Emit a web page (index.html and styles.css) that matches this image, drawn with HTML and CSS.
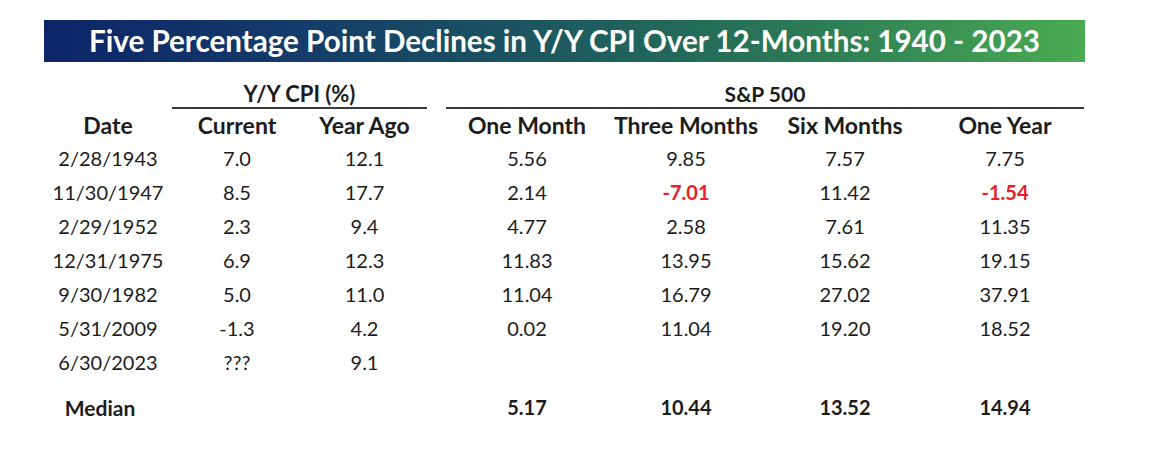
FILE: index.html
```html
<!DOCTYPE html>
<html>
<head>
<meta charset="utf-8">
<link rel="stylesheet" href="styles.css">
</head>
<body>
<div class="page">
  <div class="title">Five Percentage Point Declines in Y/Y CPI Over 12-Months: 1940 - 2023</div>
  <div class="table">
    <div class="row group">
      <div class="cell"></div>
      <div class="cell span2 underlined">Y/Y CPI (%)</div>
      <div class="cell"></div>
      <div class="cell span4 underlined sp">S&amp;P 500</div>
    </div>
    <div class="row head">
      <div class="cell">Date</div>
      <div class="cell">Current</div>
      <div class="cell">Year Ago</div>
      <div class="cell"></div>
      <div class="cell">One Month</div>
      <div class="cell">Three Months</div>
      <div class="cell">Six Months</div>
      <div class="cell">One Year</div>
    </div>
    <div class="row">
      <div class="cell">2/28/1943</div><div class="cell">7.0</div><div class="cell">12.1</div><div class="cell"></div>
      <div class="cell">5.56</div><div class="cell">9.85</div><div class="cell">7.57</div><div class="cell">7.75</div>
    </div>
    <div class="row">
      <div class="cell">11/30/1947</div><div class="cell">8.5</div><div class="cell">17.7</div><div class="cell"></div>
      <div class="cell">2.14</div><div class="cell neg">-7.01</div><div class="cell">11.42</div><div class="cell neg">-1.54</div>
    </div>
    <div class="row">
      <div class="cell">2/29/1952</div><div class="cell">2.3</div><div class="cell">9.4</div><div class="cell"></div>
      <div class="cell">4.77</div><div class="cell">2.58</div><div class="cell">7.61</div><div class="cell">11.35</div>
    </div>
    <div class="row">
      <div class="cell">12/31/1975</div><div class="cell">6.9</div><div class="cell">12.3</div><div class="cell"></div>
      <div class="cell">11.83</div><div class="cell">13.95</div><div class="cell">15.62</div><div class="cell">19.15</div>
    </div>
    <div class="row">
      <div class="cell">9/30/1982</div><div class="cell">5.0</div><div class="cell">11.0</div><div class="cell"></div>
      <div class="cell">11.04</div><div class="cell">16.79</div><div class="cell">27.02</div><div class="cell">37.91</div>
    </div>
    <div class="row">
      <div class="cell">5/31/2009</div><div class="cell">-1.3</div><div class="cell">4.2</div><div class="cell"></div>
      <div class="cell">0.02</div><div class="cell">11.04</div><div class="cell">19.20</div><div class="cell">18.52</div>
    </div>
    <div class="row">
      <div class="cell">6/30/2023</div><div class="cell">???</div><div class="cell">9.1</div><div class="cell"></div>
      <div class="cell"></div><div class="cell"></div><div class="cell"></div><div class="cell"></div>
    </div>
    <div class="row median">
      <div class="cell label">Median</div><div class="cell"></div><div class="cell"></div><div class="cell"></div>
      <div class="cell">5.17</div><div class="cell">10.44</div><div class="cell">13.52</div><div class="cell">14.94</div>
    </div>
  </div>
</div>
</body>
</html>
```
FILE: styles.css
```css
html, body {
  margin: 0;
  padding: 0;
  background: #ffffff;
}
.page {
  padding: 20px 0 0 44px;
  font-family: Lato, "Liberation Sans", sans-serif;
  color: #1c1c1c;
}
.title {
  width: 1041px;
  height: 42px;
  box-sizing: border-box;
  display: flex;
  align-items: center;
  justify-content: center;
  background: linear-gradient(90deg, #0d2568 0%, #143c69 25%, #1d5a5e 50%, #2d7d55 75%, #4aab52 100%);
  color: #ffffff;
  font-size: 29.6px;
  font-weight: 700;
  padding-bottom: 1px;
}
.table {
  width: 1040px;
  margin-top: 13px;
}
.row {
  display: grid;
  grid-template-columns: 128px 130px 125px 19px 162px 156px 162px 158px;
  height: 34px;
  box-sizing: border-box;
  align-items: center;
  font-size: 20px;
}
.cell {
  text-align: center;
  white-space: nowrap;
}
.span2 { grid-column: span 2; }
.span4 { grid-column: span 4; }
.group {
  height: 32px;
  align-items: stretch;
  font-weight: 700;
  font-size: 22px;
}
.group .sp {
  font-size: 21px;
}
.underlined {
  border-bottom: 2px solid #3a3a3a;
  display: flex;
  align-items: center;
  justify-content: center;
  padding-top: 5px;
}
.head {
  font-weight: 700;
  height: 34px;
  padding-top: 2px;
  font-size: 23px;
}
.neg {
  color: #e8202a;
  font-weight: 700;
}
.median {
  margin-top: 11px;
  font-weight: 700;
}
.median .label {
  padding-right: 16px;
  font-size: 21px;
}
```
